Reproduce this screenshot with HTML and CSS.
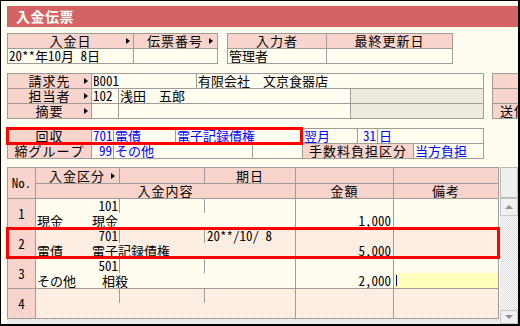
FILE: index.html
```html
<!DOCTYPE html>
<html lang="ja">
<head>
<meta charset="utf-8">
<title>入金伝票</title>
<link rel="stylesheet" href="styles.css">
</head>
<body>
<div class="win">
  <div class="title">入金伝票</div>

  <div class="hdr">
    <div class="box box-a">
      <div class="c lbl arr"><span>入金日</span></div>
      <div class="c lbl arr arr4"><span>伝票番号</span></div>
      <div class="c val">20**年10月 8日</div>
      <div class="c val"></div>
    </div>
    <div class="box box-b">
      <div class="c lbl"><span>入力者</span></div>
      <div class="c lbl"><span>最終更新日</span></div>
      <div class="c val">管理者</div>
      <div class="c val"></div>
    </div>
  </div>

  <div class="sec2">
    <div class="box box-c">
      <div class="c lbl arr"><span>請求先</span></div>
      <div class="c val s2">B001</div>
      <div class="c val s2">有限会社　文京食器店</div>

      <div class="c lbl arr"><span>担当者</span></div>
      <div class="c val">102</div>
      <div class="c val s2">浅田　五郎</div>
      <div class="c gray"></div>

      <div class="c lbl arr"><span>摘要</span></div>
      <div class="c val"></div>
      <div class="c val s2"></div>
      <div class="c gray"></div>
    </div>
    <div class="box box-side">
      <div class="c lbl"></div>
      <div class="c lbl"></div>
      <div class="c lbl side-t">送信</div>
    </div>
  </div>

  <div class="box box-d">
    <div class="c lbl"><span>回収</span></div>
    <div class="c val blue num">701</div>
    <div class="c val blue">電債</div>
    <div class="c val blue s2">電子記録債権</div>
    <div class="c val blue">翌月</div>
    <div class="c val blue num">31</div>
    <div class="c val blue s2">日</div>

    <div class="c lbl"><span>締グループ</span></div>
    <div class="c val blue num">99</div>
    <div class="c val blue s2">その他</div>
    <div class="c val"></div>
    <div class="c lbl s3"><span>手数料負担区分</span></div>
    <div class="c val blue">当方負担</div>
  </div>

  <div class="gridwrap">
    <div class="gleft">
      <div class="grid">
        <div class="c lbl no-h"><span>No.</span></div>
        <div class="c lbl arr arr4"><span>入金区分</span></div>
        <div class="c lbl"></div>
        <div class="c lbl"><span>期日</span></div>
        <div class="c lbl"></div>
        <div class="c lbl"></div>

        <div class="c lbl s3"><span>入金内容</span></div>
        <div class="c lbl"><span>金額</span></div>
        <div class="c lbl"><span>備考</span></div>

        <div class="c lbl rno">1</div>
        <div class="cnt s3">
          <div class="l1"><span class="code">101</span><span class="blank"></span><span class="date"></span></div>
          <div class="l2"><span class="k">現金</span><span class="n">現金</span></div>
        </div>
        <div class="amt">1,000</div>
        <div class="note"></div>

        <div class="c lbl rno">2</div>
        <div class="cnt s3 alt">
          <div class="l1"><span class="code">701</span><span class="blank"></span><span class="date">20**/10/ 8</span></div>
          <div class="l2"><span class="k">電債</span><span class="n">電子記録債権</span></div>
        </div>
        <div class="amt alt">5,000</div>
        <div class="note alt"></div>

        <div class="c lbl rno">3</div>
        <div class="cnt s3">
          <div class="l1"><span class="code">501</span><span class="blank"></span><span class="date"></span></div>
          <div class="l2"><span class="k">その他</span><span class="n n-off">相殺</span></div>
        </div>
        <div class="amt">2,000</div>
        <div class="note"><div class="edit"><i class="caret"></i></div></div>

        <div class="c lbl rno">4</div>
        <div class="cnt s3 alt">
          <div class="l1"><span class="code"></span><span class="blank"></span><span class="date"></span></div>
          <div class="l2"></div>
        </div>
        <div class="amt alt"></div>
        <div class="note alt"></div>
      </div>
      <div class="hatch"></div>
    </div>
    <div class="vscroll">
      <div class="vs-corner"></div>
      <div class="vs-btn vs-up"><i></i></div>
      <div class="vs-track"></div>
      <div class="vs-btn vs-down"><i></i></div>
    </div>
  </div>

  <div class="mark mark-1"></div>
  <div class="mark mark-2"></div>
</div>
</body>
</html>
```

FILE: styles.css
```css
* { box-sizing: border-box; }

html, body {
  margin: 0;
  padding: 0;
  background: #fffcf0;
}

.win {
  position: relative;
  width: 520px;
  height: 326px;
  overflow: hidden;
  border-top: 1px solid #000;
  border-left: 1px solid #000;
  border-right: 2px solid #000;
  border-bottom: 2px solid #000;
  background: #fffcf0;
  padding: 5px 0 0 6px;
  display: flex;
  flex-direction: column;
  font-family: "Noto Sans Mono CJK JP", "Noto Sans CJK JP", sans-serif;
  font-size: 13px;
  line-height: 14px;
  color: #000;
}

.title {
  flex: none;
  height: 21px;
  line-height: 21px;
  background: #d46464;
  color: #fff;
  font-weight: bold;
  font-size: 14px;
  letter-spacing: 0.5px;
  padding-left: 9px;
}

.box {
  display: grid;
  gap: 1px;
  padding: 1px;
  background: #a09c98;
  flex: none;
}

.c {
  background: #fffcf0;
  white-space: nowrap;
}

.val { padding-left: 1px; }
.gray { background: #eeeae0; }
.blue { color: #0000ff; }
.num { text-align: right; padding-right: 1px; }
.s2 { grid-column: span 2; }
.s3 { grid-column: span 3; }

.lbl {
  background: #f8d4cc;
  display: flex;
  align-items: center;
  justify-content: center;
  letter-spacing: 1px;
}
.lbl > span { text-align: center; }

.arr {
  padding-left: 7px;
}
.arr > span { flex: 1; }
.arr::after {
  content: "";
  flex: none;
  width: 0;
  height: 0;
  border-left: 4px solid #000;
  border-top: 3px solid transparent;
  border-bottom: 3px solid transparent;
  margin-right: 3px;
}
.arr4::after { margin-right: 4px; }

/* header */
.hdr {
  display: flex;
  gap: 9px;
  margin-top: 6px;
  flex: none;
}
.box-a {
  grid-template-columns: 125px 83px;
  grid-template-rows: 14px 14px;
}
.box-b {
  grid-template-columns: 98px 125px;
  grid-template-rows: 14px 14px;
}

/* section 2 */
.sec2 {
  display: flex;
  gap: 8px;
  margin-top: 9px;
  flex: none;
}
.box-c {
  grid-template-columns: 83px 26px 77px 153px 132px;
  grid-template-rows: 14px 14px 14px;
}
.box-side {
  width: 80px;
  grid-template-columns: 1fr;
  grid-template-rows: 14px 14px 14px;
}
.side-t {
  justify-content: flex-start;
  padding-left: 7px;
}

/* section 3 */
.box-d {
  margin-top: 9px;
  width: 477px;
  grid-template-columns: 83px 21px 61px 76px 49px 54px 19px 35px 69px;
  grid-template-rows: 14px 14px;
}

/* grid */
.gridwrap {
  display: flex;
  margin-top: 8px;
  flex: none;
}
.gleft {
  width: 492px;
  flex: none;
}
.grid {
  display: grid;
  gap: 1px;
  padding: 1px;
  background: #a09c98;
  grid-template-columns: 27px 83px 84px 90px 97px 104px;
  grid-template-rows: 15px 14px 29px 29px 29px 29px;
}
.no-h {
  grid-row: span 2;
  letter-spacing: 0;
}
.rno {
  letter-spacing: 0;
}

.cnt {
  background: #fffcf0;
  display: flex;
  flex-direction: column;
  white-space: nowrap;
}
.amt {
  background: #fffcf0;
  display: flex;
  align-items: flex-end;
  justify-content: flex-end;
  padding-right: 2px;
}
.note {
  background: #fffcf0;
  display: flex;
  flex-direction: column;
  justify-content: flex-end;
}
.alt { background: #fdeee3; }

.l1 {
  display: flex;
  height: 14px;
}
.code {
  width: 84px;
  flex: none;
  text-align: right;
  padding-right: 1px;
  border-right: 1px solid #a09c98;
}
.blank {
  width: 85px;
  flex: none;
  border-right: 1px solid #a09c98;
}
.date {
  padding-left: 2px;
}
.l2 {
  display: flex;
  height: 14px;
  padding-left: 1px;
  margin-top: 1px;
}
.k {
  width: 55px;
  flex: none;
}
.n-off { padding-left: 10px; }

.edit {
  height: 15px;
  background: #ffffbb;
  display: flex;
  align-items: center;
  padding-left: 2px;
}
.caret {
  display: block;
  width: 1px;
  height: 11px;
  background: #000080;
}

.hatch {
  height: 5px;
  background: repeating-conic-gradient(#ffffff 0 25%, #d8d8d8 0 50%) 0 0 / 2px 2px;
}

.vscroll {
  width: 18px;
  flex: none;
  margin-left: 1px;
  height: 157px;
  display: flex;
  flex-direction: column;
}
.vs-corner {
  height: 31px;
  background: #efefef;
  border: 1px solid #b8b8b8;
}
.vs-btn {
  background: #f0f0f0;
  border: 1px solid #c8c8c8;
  display: flex;
  align-items: center;
  justify-content: center;
}
.vs-up { height: 18px; }
.vs-down { height: 14px; }
.vs-btn i {
  display: block;
  width: 0;
  height: 0;
  border-left: 4px solid transparent;
  border-right: 4px solid transparent;
}
.vs-up i { border-bottom: 4px solid #909090; }
.vs-down i { border-top: 4px solid #909090; }
.vs-track {
  flex: 1;
  background: repeating-conic-gradient(#ffffff 0 25%, #dcdcdc 0 50%) 0 0 / 2px 2px;
}

/* annotation boxes */
.mark {
  position: absolute;
  border: 3px solid #ff0000;
}
.mark-1 {
  left: 5px;
  top: 126px;
  width: 297px;
  height: 18px;
}
.mark-2 {
  left: 5px;
  top: 226px;
  width: 494px;
  height: 32px;
}
```
